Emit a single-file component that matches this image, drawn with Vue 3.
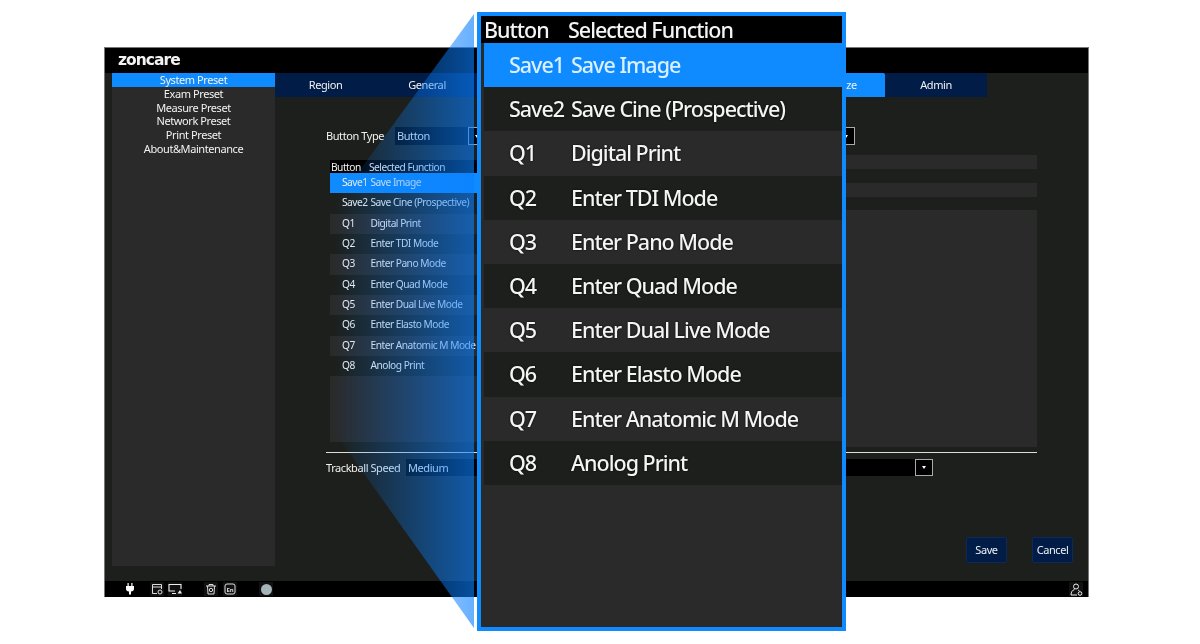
<script setup>
const menu = ['System Preset', 'Exam Preset', 'Measure Preset', 'Network Preset', 'Print Preset', 'About&Maintenance']
const tabs = [
  { label: 'Region', cls: 'w-region' },
  { label: 'General', cls: 'w-general' },
  { label: '', cls: 'w-a' },
  { label: '', cls: 'w-b' },
  { label: '', cls: 'w-c' },
  { label: 'Customize', cls: 'w-active', active: true },
  { label: 'Admin', cls: 'w-admin' },
]
const rows = [
  ['Save1', 'Save Image'],
  ['Save2', 'Save Cine (Prospective)'],
  ['Q1', 'Digital Print'],
  ['Q2', 'Enter TDI Mode'],
  ['Q3', 'Enter Pano Mode'],
  ['Q4', 'Enter Quad Mode'],
  ['Q5', 'Enter Dual Live Mode'],
  ['Q6', 'Enter Elasto Mode'],
  ['Q7', 'Enter Anatomic M Mode'],
  ['Q8', 'Anolog Print'],
]
</script>

<template>
  <div class="page">
    <div class="screen">
      <header class="topbar"><span class="logo">zoncare</span></header>
      <div class="main">
        <aside class="sidebar">
          <div v-for="(m, i) in menu" :key="m" class="menu-item" :class="{ on: i === 0 }">{{ m }}</div>
        </aside>
        <section class="content">
          <nav class="tabs">
            <div v-for="t in tabs" :key="t.cls" class="tab" :class="[t.cls, { active: t.active }]">{{ t.label }}</div>
          </nav>
          <div class="panel">
            <div class="type-row">
              <span class="lbl lbl-type">Button Type</span>
              <div class="select s-first">
                <span class="val">Button</span>
                <span class="arrow"><i></i></span>
              </div>
              <div class="select s-second">
                <span></span>
                <span class="arrow"><i></i></span>
              </div>
            </div>
            <div class="columns">
              <div class="list">
                <div class="list-head"><span class="h1">Button</span><span>Selected Function</span></div>
                <div v-for="(r, i) in rows" :key="r[0]" class="list-row" :class="{ sel: i === 0, alt: i > 1 && i % 2 === 0, alt2: i > 1 && i % 2 === 1 }">
                  <span class="k">{{ r[0] }}</span><span class="v">{{ r[1] }}</span>
                </div>
                <div class="list-rest"></div>
              </div>
              <div class="right-col">
                <div class="bar"></div>
                <div class="bar"></div>
                <div class="bigbox"></div>
              </div>
            </div>
            <div class="rule"></div>
            <div class="track-row">
              <span class="lbl lbl-track">Trackball Speed</span>
              <div class="select select2">
                <span class="val">Medium</span>
                <span class="arrow"><i></i></span>
              </div>
            </div>
            <div class="actions">
              <button class="btn">Save</button>
              <button class="btn">Cancel</button>
            </div>
          </div>
        </section>
      </div>
      <footer class="status">
        <svg class="plug" width="12" height="12" viewBox="0 0 12 12"><path d="M3.5 0h1.2v3h2.6V0h1.2v3H10v2.5a3 3 0 0 1-3 3v3H5v-3a3 3 0 0 1-3-3V3h1.500z" fill="#fff"/></svg>
        <span class="ico i1"><svg width="12" height="12" viewBox="0 0 12 12" fill="none" stroke="#ddd" stroke-width="1"><path d="M6 10.500H1.500v-9h9V6M1.500 4h9"/><circle cx="9" cy="9" r="2"/></svg></span>
        <span class="ico i2"><svg width="14" height="12" viewBox="0 0 14 12" fill="none" stroke="#eee" stroke-width="1.100"><path d="M7 8H1V1.500h12V6M4 10.500h4"/><path d="M9.500 10.500L12 7l2 3.500z" fill="#eee" stroke="none"/></svg></span>
        <span class="ico i3"><svg width="12" height="12" viewBox="0 0 12 12" fill="none" stroke="#ddd" stroke-width="1"><path d="M1 3h10M4 3V1.500h4V3M2.500 3l.5 8h6l.5-8"/><circle cx="6" cy="7" r="1.700"/></svg></span>
        <span class="ico i4"><svg width="12" height="12" viewBox="0 0 12 12"><rect x="1" y="1" width="10" height="10" rx="2" fill="none" stroke="#ddd"/><text x="2.500" y="9" class="en">En</text></svg></span>
        <span class="ico i5"><span class="dot"></span></span>
        <span class="ico user"><svg width="13" height="13" viewBox="0 0 13 13" fill="none" stroke="#eee" stroke-width="1"><circle cx="6" cy="3.500" r="2.500"/><path d="M1 12c0-3 1.500-5 3.500-5.500M8 7c.8.300 1.200.700 1.500 1M1 12h6"/><circle cx="10" cy="10.500" r="1.800"/></svg></span>
      </footer>
    </div>

    <svg class="funnel" width="142" height="618" viewBox="0 0 142 618">
      <defs>
        <linearGradient id="fg" x1="0" x2="1" y1="0" y2="0">
          <stop offset="0" stop-color="#0a7fff" stop-opacity="0"/>
          <stop offset="1" stop-color="#0a7fff" stop-opacity="0.62"/>
        </linearGradient>
      </defs>
      <polygon points="141,0 0,193 0,416 141,614" fill="url(#fg)"/>
    </svg>

    <div class="zoom">
      <div class="zoom-head"><span class="zh1">Button</span><span>Selected Function</span></div>
      <div v-for="(r, i) in rows" :key="'z' + r[0]" class="zoom-row" :class="{ sel: i === 0, alt: i > 1 && i % 2 === 0, alt2: i > 1 && i % 2 === 1 }">
        <span class="zk">{{ r[0] }}</span><span class="zv">{{ r[1] }}</span>
      </div>
    </div>
  </div>
</template>

<style>
html, body { margin: 0; background: #fff; }
</style>

<style scoped>
.page {
  position: relative;
  width: 1200px;
  height: 644px;
  padding: 47px 111px 47px 104px;
  box-sizing: border-box;
  overflow: hidden;
  background: #fff;
  font-family: "Noto Sans", "Open Sans", sans-serif;
}
.screen {
  width: 985px;
  height: 550px;
  box-sizing: border-box;
  border: 1px solid #777;
  border-bottom: 0;
  display: flex;
  flex-direction: column;
  background: #1c1f1b;
  color: #f2f2f2;
  font-size: 11px;
  letter-spacing: -0.42px;
  filter: blur(0.25px);
}
.topbar { height: 25px; background: #000; padding-left: 13px; flex: none; }
.logo {
  display: block;
  font: 700 15.500px/24px "DejaVu Sans", sans-serif;
  letter-spacing: -0.95px;
  color: #f2f2f2;
}
.main { flex: 1; display: flex; padding-left: 7px; min-height: 0; }
.sidebar { width: 163px; height: 493px; background: #2a2a2a; flex: none; }
.menu-item { height: 13.700px; line-height: 13px; text-align: center; }
.menu-item.on { background: #0f8bff; height: 14px; line-height: 13px; }
.content { flex: 1; min-width: 0; display: flex; flex-direction: column; }
.tabs { display: flex; height: 24px; flex: none; }
.tab {
  background: #001c47;
  text-align: center;
  line-height: 24px;
  overflow: hidden;
  flex: none;
}
.w-region { width: 101px; }
.w-general { width: 102px; }
.w-a { width: 102px; }
.w-b { width: 102px; }
.w-c { width: 102px; }
.w-active { width: 101px; background: #0f8bff; border-radius: 2px 2px 0 0; padding-right: 6px; box-sizing: border-box; }
.w-admin { width: 102px; }
.panel { padding: 30px 0 0 51px; flex: 1; display: flex; flex-direction: column; }
.type-row { display: flex; align-items: center; height: 18px; flex: none; }
.lbl { white-space: nowrap; flex: none; margin-top: -1px; }
.val { margin-top: -1px; }
.lbl-type { width: 69px; }
.lbl-track { width: 80px; }
.select {
  height: 18px;
  background: #000;
  display: flex;
  align-items: center;
  justify-content: space-between;
  padding-left: 2px;
  box-sizing: border-box;
  flex: none;
}
.s-first { width: 91px; }
.s-second { width: 340px; margin-left: 29px; }
.select2 { width: 527px; height: 17px; }
.arrow {
  width: 18px;
  height: 18px;
  border: 1.500px solid #aaa;
  background: #000;
  display: flex;
  align-items: center;
  justify-content: center;
  box-sizing: border-box;
  flex: none;
}
.select2 .arrow { height: 17px; }
.arrow i {
  width: 0;
  height: 0;
  border-left: 2.500px solid transparent;
  border-right: 2.500px solid transparent;
  border-top: 3px solid #fff;
}
.columns { display: flex; margin-top: 10px; height: 292px; width: 711px; flex: none; }
.list {
  width: 280px;
  flex: none;
  font-size: 10.200px;
  letter-spacing: -0.5px;
  display: flex;
  flex-direction: column;
  margin: 5px 0 5px 4px;
}
.list-head { height: 13px; line-height: 14px; background: #000; padding-left: 1px; display: flex; flex: none; }
.h1 { width: 38px; }
.list-row {
  height: 20.330px;
  line-height: 19.800px;
  display: flex;
  padding-left: 12px;
  white-space: nowrap;
  flex: none;
}
.list-row.sel { background: #0f8bff; }
.list-row.alt { background: #2a2a2a; }
.list-row.alt2 { background: #1c1f1b; }
.k { width: 28.500px; flex: none; }
.list-rest { flex: 1; background: #2a2a2a; }
.right-col { flex: 1; min-width: 0; display: flex; flex-direction: column; }
.bar { height: 14px; background: #2a2a2a; margin-bottom: 14px; flex: none; }
.bigbox { flex: 1; margin-top: -1px; background: #2a2a2a; }
.rule { width: 711px; height: 1px; background: #ddd; margin-top: 5px; flex: none; }
.track-row { display: flex; align-items: center; height: 17px; margin-top: 6px; flex: none; }
.actions {
  display: flex;
  justify-content: flex-end;
  gap: 25px;
  margin-top: 61px;
  padding-right: 15px;
}
.btn {
  width: 41px;
  height: 26px;
  background: #001c47;
  border: 1px solid #0c2a55;
  border-radius: 2px;
  color: #f2f2f2;
  font: 11px "Noto Sans", sans-serif;
  letter-spacing: -0.42px;
  padding: 0 0 2px;
}
.status {
  height: 16px;
  background: #000;
  flex: none;
  display: flex;
  align-items: center;
}
.plug { margin-left: 19px; }
.ico { width: 14px; height: 14px; display: flex; align-items: center; justify-content: center; background: #111; flex: none; }
.i1 { margin-left: 14px; }
.i2 { margin-left: 4px; }
.i3 { margin-left: 22px; }
.i4 { margin-left: 5px; }
.i5 { margin-left: 22px; }
.user { margin-left: auto; margin-right: 5px; }
.dot { width: 11px; height: 11px; border-radius: 50%; background: #a5b4b8; }
.en { font: 700 6px "Noto Sans", sans-serif; fill: #ddd; letter-spacing: 0; }
.funnel { position: absolute; left: 333px; top: 14px; }
.zoom {
  position: absolute;
  left: 477px;
  top: 12px;
  width: 369px;
  height: 619px;
  box-sizing: border-box;
  border: 4px solid #0f8bff;
  background: #2a2a2a;
  color: #f4f4f4;
  display: flex;
  flex-direction: column;
}
.zoom-head {
  height: 27px;
  line-height: 27px;
  background: #000;
  font-size: 21.500px;
  font-weight: 500;
  letter-spacing: -1px;
  display: flex;
  flex: none;
  padding-left: 3px;
  white-space: nowrap;
  filter: blur(0.4px);
}
.zh1 { width: 84px; }
.zoom-row {
  height: 44.200px;
  line-height: 44.200px;
  font-size: 21.500px;
  font-weight: 500;
  letter-spacing: -1px;
  display: flex;
  flex: none;
  margin-left: 3px;
  padding-left: 25px;
  white-space: nowrap;
  background: #1c1f1b;
  text-shadow: 0 0 2px #000;
  filter: blur(0.4px);
}
.zoom-row.sel { background: #0f8bff; color: #d8f0ff; text-shadow: none; }
.zoom-row.alt { background: #2a2a2a; }
.zoom-row.alt2 { background: #1c1f1b; }
.zk { width: 62px; flex: none; }
</style>
